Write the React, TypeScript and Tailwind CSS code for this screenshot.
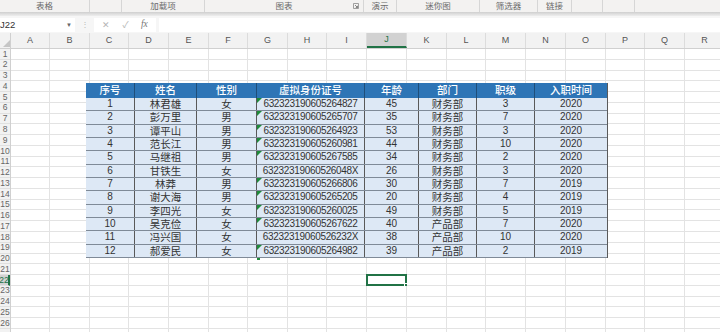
import React from "react";

const colLetters = ["A","B","C","D","E","F","G","H","I","J","K","L","M","N","O","P","Q","R"];
const colW = ["w-[39px]","w-[40px]","w-[39px]","w-[40px]","w-[40px]","w-[39px]","w-[40px]","w-[39px]","w-[40px]","w-[40px]","w-[40px]","w-[39px]","w-[40px]","w-[40px]","w-[40px]","w-[39px]","w-[40px]","w-[40px]"];

const groups: { w: string; label: string; launcher?: boolean }[] = [
  { w: "w-[90px]", label: "表格" },
  { w: "w-[32px]", label: "" },
  { w: "w-[83px]", label: "加载项" },
  { w: "w-[159px]", label: "图表", launcher: true },
  { w: "w-[33px]", label: "演示" },
  { w: "w-[83px]", label: "迷你图" },
  { w: "w-[58px]", label: "筛选器" },
  { w: "w-[34px]", label: "链接" },
  { w: "w-[31px]", label: "" },
  { w: "w-[32px]", label: "" },
];

const tableCols = [
  { w: "w-[49px]", h: "序号" },
  { w: "w-[62px]", h: "姓名" },
  { w: "w-[60px]", h: "性别" },
  { w: "w-[108px]", h: "虚拟身份证号" },
  { w: "w-[54px]", h: "年龄" },
  { w: "w-[58px]", h: "部门" },
  { w: "w-[58px]", h: "职级" },
  { w: "w-[72px]", h: "入职时间" },
];

const data: string[][] = [
  ["1","林君雄","女","632323190605264827","45","财务部","3","2020"],
  ["2","彭万里","男","632323190605265707","35","财务部","7","2020"],
  ["3","谭平山","男","632323190605264923","53","财务部","3","2020"],
  ["4","范长江","男","632323190605260981","44","财务部","10","2020"],
  ["5","马继祖","男","632323190605267585","34","财务部","2","2020"],
  ["6","甘铁生","女","63232319060526048X","26","财务部","3","2020"],
  ["7","林莽","男","632323190605266806","30","财务部","7","2019"],
  ["8","谢大海","男","632323190605265205","20","财务部","4","2019"],
  ["9","李四光","女","632323190605260025","49","财务部","5","2019"],
  ["10","吴克俭","女","632323190605267622","40","产品部","7","2020"],
  ["11","冯兴国","女","63232319060526232X","38","产品部","10","2020"],
  ["12","郝爱民","女","632323190605264982","39","产品部","2","2019"],
];

const font = "font-['Liberation_Sans','Noto_Sans_CJK_SC',sans-serif]";

function cellText(ci: number) {
  if (ci === 3) return "text-[10px] tracking-[-0.33px]";
  if (ci === 0 || ci === 4 || ci === 6 || ci === 7) return "text-[10px]";
  return "text-[10.5px]";
}

export default function App() {
  const rows = Array.from({ length: 27 }, (_, i) => i + 1);
  return (
    <div className={`w-[720px] h-[332px] overflow-hidden bg-white ${font} relative`}>
      {/* Ribbon group labels */}
      <div className="flex h-[12px] bg-[#f3f2f1] overflow-hidden">
        {groups.map((g, i) => (
          <div key={i} className={`${g.w} shrink-0 h-full border-r border-[#d6d6d6] relative flex items-end justify-center`}>
            <span className="text-[8.5px] leading-[10px] text-[#6a6a6a] pb-[1px]">{g.label}</span>
            {g.launcher && (
              <svg className="absolute right-[4px] bottom-[3px]" width="6" height="6" viewBox="0 0 6 6">
                <path d="M0.5 0.5H5.5V5.5H0.5Z" fill="none" stroke="#8a8a8a" strokeWidth="0.8" />
                <path d="M2 2L4.5 4.5M4.5 2.8V4.5H2.8" fill="none" stroke="#6a6a6a" strokeWidth="0.8" />
              </svg>
            )}
          </div>
        ))}
        <div className="flex-1" />
      </div>
      <div className="h-[4px] bg-gradient-to-b from-[#cfcfcf] to-[#eeeeee]" />
      {/* Formula bar */}
      <div className="flex items-center h-[17px] bg-[#f6f6f6] pt-[2px] pb-[1px]">
        <div className="w-[75px] h-[14px] bg-white flex items-center justify-between pr-[3px]">
          <span className="text-[9.5px] text-[#333] leading-none">J22</span>
          <span className="text-[6px] text-[#666] leading-none">▼</span>
        </div>
        <div className="w-[19px] flex justify-center">
          <span className="text-[8px] text-[#b8b8b8] leading-none">⋮</span>
        </div>
        <div className="w-[62px] h-[14px] bg-white flex items-center justify-around px-[2px]">
          <span className="text-[9px] text-[#b5b5b5] leading-none">✕</span>
          <span className="text-[9px] text-[#b5b5b5] leading-none">✓</span>
          <span className="text-[9.5px] italic text-[#777] leading-none font-['Liberation_Serif',serif]">fx</span>
        </div>
        <div className="w-[3px]" />
        <div className="flex-1 h-[14px] bg-white" />
      </div>
      {/* Column header */}
      <div className="flex h-[16px] bg-[#f2f2f2] border-b border-[#d0d0d0]">
        <div className="w-[11px] shrink-0 relative border-r border-[#d0d0d0]">
          <svg className="absolute left-[3px] bottom-[1px]" width="7" height="7" viewBox="0 0 7 7">
            <path d="M7 0V7H0Z" fill="#c6c6c6" />
          </svg>
        </div>
        {colLetters.map((c, i) => (
          <div
            key={c}
            className={`${colW[i]} shrink-0 flex items-center justify-center text-[9px] border-r border-[#dcdcdc] ${
              i === 9 ? "bg-[#d2d2d2] border-b-2 border-b-[#217346] text-[#217346]" : "text-[#555]"
            }`}
          >
            {c}
          </div>
        ))}
      </div>
      {/* Sheet body */}
      <div className="flex">
        <div className="w-[11px] shrink-0 flex flex-col bg-[#f2f2f2] border-r border-[#d0d0d0]">
          {rows.map((r) => (
            <div
              key={r}
              className={`h-[10.78px] shrink-0 flex items-center justify-center text-[8.5px] leading-none border-b border-[#e0e0e0] overflow-visible whitespace-nowrap ${
                r === 22 ? "bg-[#d2d2d2] text-[#217346] border-r-2 border-r-[#217346]" : "text-[#666]"
              }`}
            >
              {r <= 26 ? r : ""}
            </div>
          ))}
        </div>
        <div className="relative flex-1 flex flex-col">
          {rows.map((r) => (
            <div key={r} className="flex h-[10.78px] shrink-0">
              {colLetters.map((c, i) => (
                <div key={c} className={`${colW[i]} shrink-0 border-r border-b border-[#e3e3e3] relative`}>
                  {r === 22 && i === 9 && (
                    <div className="absolute -left-px -top-px -right-px -bottom-px border-2 border-[#217346]">
                      <div className="absolute -right-[3px] -bottom-[3px] w-[4px] h-[4px] bg-[#217346] border border-white" />
                    </div>
                  )}
                </div>
              ))}
            </div>
          ))}
          {/* Data table (floating object over grid) */}
          <div className="absolute left-[75px] top-[34px] flex flex-col border-r border-[#5a5a5a]">
            <div className="flex h-[15px] bg-[#2e75b6]">
              {tableCols.map((c, i) => (
                <div
                  key={i}
                  className={`${c.w} shrink-0 flex items-center justify-center text-white text-[10.5px] leading-none font-medium ${
                    i < tableCols.length - 1 ? "border-r border-[#1f4e79]" : ""
                  }`}
                >
                  {c.h}
                </div>
              ))}
            </div>
            {data.map((row, ri) => (
              <div key={ri} className="flex h-[13.33px] bg-[#dde8f5] border-b border-[#7f8a97]">
                {row.map((v, ci) => (
                  <div
                    key={ci}
                    className={`${tableCols[ci].w} shrink-0 relative flex items-center justify-center leading-none text-[#333] ${cellText(ci)} ${
                      ci < row.length - 1 ? "border-r border-[#595959]" : ""
                    }`}
                  >
                    {ci === 3 && !v.endsWith("X") && (
                      <svg className="absolute left-0 top-0" width="5" height="5" viewBox="0 0 5 5">
                        <path d="M0 0H5L0 5Z" fill="#1e8a3a" />
                      </svg>
                    )}
                    {v}
                  </div>
                ))}
              </div>
            ))}
            <div className="absolute left-[171px] -bottom-[2px] w-[3px] h-[2px] bg-[#1e8a3a]" />
          </div>
        </div>
      </div>
    </div>
  );
}
